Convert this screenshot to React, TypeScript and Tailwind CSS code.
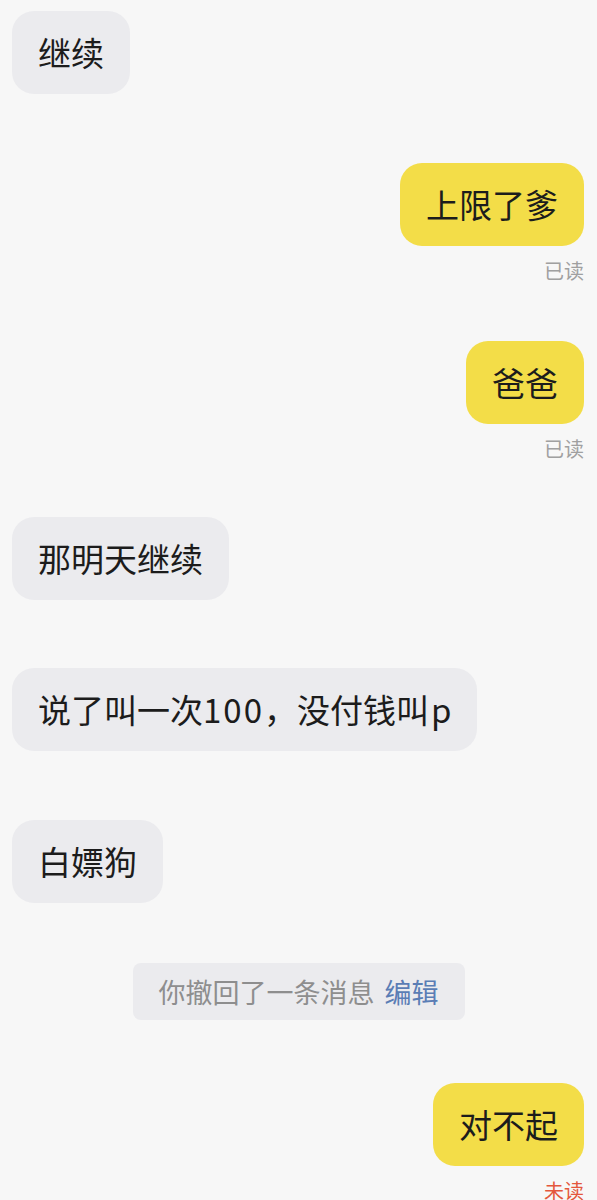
import type { ReactNode } from 'react';

const font = { fontFamily: '"PingFang SC", "Noto Sans CJK SC", "Noto Sans", sans-serif' };

function Left({ children, className = '' }: { children: ReactNode; className?: string }) {
  return (
    <div className={`flex justify-start pl-[12px] ${className}`}>
      <div className="rounded-[22px] bg-[#ebebee] px-[26px] py-[22px] text-[33px] leading-[39px] text-[#1c1c1c]">
        {children}
      </div>
    </div>
  );
}

function Right({ text, status, className = '' }: { text: string; status: 'read' | 'unread'; className?: string }) {
  return (
    <div className={`flex flex-col items-end pr-[13px] ${className}`}>
      <div className="rounded-[22px] bg-[#f3dd48] px-[26px] py-[22px] text-[33px] leading-[39px] text-[#1c1c1c]">
        {text}
      </div>
      <div
        className={`mt-[12px] text-[20px] leading-[26px] ${status === 'read' ? 'text-[#a0a0a0]' : 'text-[#e4573d]'}`}
      >
        {status === 'read' ? '已读' : '未读'}
      </div>
    </div>
  );
}

export default function App() {
  return (
    <div className="min-h-[1200px] w-full overflow-hidden bg-[#f7f7f7] pt-[11px]" style={font}>
      <Left>继续</Left>
      <Right text="上限了爹" status="read" className="mt-[69px]" />
      <Right text="爸爸" status="read" className="mt-[57px]" />
      <Left className="mt-[55px]">那明天继续</Left>
      <Left className="mt-[68px]">
        说了叫一次<span className="tracking-[2px]">100</span>，没付钱叫<span className="pl-[2px]">p</span>
      </Left>
      <Left className="mt-[69px]">白嫖狗</Left>
      <div className="mt-[60px] flex justify-center">
        <div className="rounded-[8px] bg-[#ebebee] px-[26px] py-[11px] text-[27px] leading-[35px] text-[#8e8e8e]">
          你撤回了一条消息<span className="ml-[10px] text-[#5a7db5]">编辑</span>
        </div>
      </div>
      <Right text="对不起" status="unread" className="mt-[63px]" />
    </div>
  );
}
